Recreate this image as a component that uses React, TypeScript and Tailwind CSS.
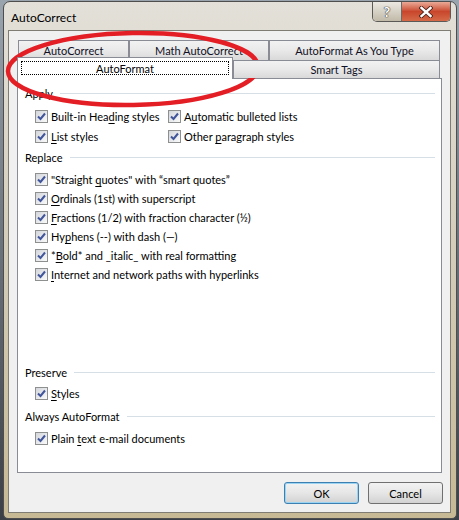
import React from "react"

const font = { fontFamily: "Lato, 'Noto Sans', sans-serif" }

function Check() {
  return (
    <span className="flex h-[13px] w-[13px] shrink-0 items-center justify-center border border-[#8e8f8f] bg-gradient-to-br from-[#d3d6db] to-[#fafafa]">
      <svg width="9" height="9" viewBox="0 0 9 9">
        <path d="M1 4.5 L3.5 7 L8 1.5" fill="none" stroke="#40559a" strokeWidth="2" />
      </svg>
    </span>
  )
}

// label parts: [before, underlined, after]
function Row({ parts, className = "" }: { parts: [string, string, string]; className?: string }) {
  return (
    <div className={`flex h-[19px] items-center gap-[3px] ${className}`}>
      <Check />
      <span className="whitespace-pre text-black">
        {parts[0]}
        <u className="underline-offset-2">{parts[1]}</u>
        {parts[2]}
      </span>
    </div>
  )
}

function Header({ label, className = "" }: { label: string; className?: string }) {
  return (
    <div className={`flex h-[16px] items-center gap-[7px] pl-[7px] pr-[6px] ${className}`}>
      <span className="text-black">{label}</span>
      <span className="h-px flex-1 bg-[#d5dfe5]" />
    </div>
  )
}

function Tab({ label, className = "" }: { label: string; className?: string }) {
  return (
    <div
      className={`flex items-center justify-center border border-b-0 border-[#898c95] bg-gradient-to-b from-[#f2f2f2] via-[#e9e9e9] to-[#d9d9d9] text-[#101024] ${className}`}
    >
      {label}
    </div>
  )
}

function Button({ label, def = false }: { label: string; def?: boolean }) {
  return (
    <div
      className={`flex h-[22px] w-[75px] items-center justify-center rounded-[3px] border ${
        def ? "border-[#3c7fb1] shadow-[inset_0_0_0_1px_#9bd3f2]" : "border-[#707070]"
      } bg-gradient-to-b from-[#f2f2f2] via-[#e6e6e6] to-[#d2d2d2] text-black`}
    >
      {label}
    </div>
  )
}

export default function App() {
  return (
    <div className="relative h-[520px] w-[459px] overflow-hidden bg-gradient-to-b from-[#9aa4ae] to-[#3b4046] pl-[3px] pt-[1px] text-[11px] leading-none" style={font}>
      <div className="flex h-[518px] w-[454px] flex-col rounded-t-[7px] rounded-b-[5px] border border-[#4e4e4e] bg-gradient-to-b from-[#e3e0d9] via-[#d3ccb8] to-[#c6b994]">
        {/* title bar */}
        <div className="flex h-[28px] items-start">
          <span className="pl-[7px] pt-[10px] text-[12px] text-black">AutoCorrect</span>
          <div className="ml-auto mr-[5px] flex h-[20px] overflow-hidden rounded-b-[5px] border border-t-0 border-[#5b5a57]">
            <div className="flex w-[29px] items-center justify-center border-r border-[#6b6a66] bg-gradient-to-b from-[#ece9e3] via-[#d6d1c5] to-[#c1baa9]">
              <span className="text-[14px] font-bold text-white [text-shadow:0_0_1px_#3a3a3a,0_0_1px_#3a3a3a,0_0_1px_#3a3a3a]">?</span>
            </div>
            <div className="flex w-[48px] items-center justify-center bg-gradient-to-b from-[#e8a997] via-[#c8462c] to-[#d56a48]">
              <svg width="14" height="12" viewBox="0 0 14 12">
                <path d="M2.5 2 L11.5 10 M11.5 2 L2.5 10" stroke="#4a2018" strokeWidth="4.2" strokeLinecap="square" />
                <path d="M2.5 2 L11.5 10 M11.5 2 L2.5 10" stroke="#ffffff" strokeWidth="2.4" strokeLinecap="square" />
              </svg>
            </div>
          </div>
        </div>

        {/* client area */}
        <div className="ml-[4px] mr-[5px] h-[483px] border border-[#7f7c74] bg-[#f0f0f0] pl-[8px] pt-[9px]">
          <div className="w-[425px]">
            {/* back row */}
            <div className="flex h-[20px] pl-[1px]">
              <Tab label="AutoCorrect" className="w-[111px]" />
              <Tab label="Math AutoCorrect" className="w-[140px]" />
              <Tab label="AutoFormat As You Type" className="w-[171px]" />
            </div>
            {/* front row */}
            <div className="relative z-10 flex h-[18px] items-end">
              <div className="-mb-px flex h-[22px] w-[216px] items-center justify-center border border-b-0 border-[#898c95] bg-white px-[3px] pb-[1px]">
                <div className="flex h-[14px] w-full items-center justify-center border border-dotted border-black text-black">
                  AutoFormat
                </div>
              </div>
              <Tab label="Smart Tags" className="h-[18px] w-[207px]" />
            </div>
            {/* panel */}
            <div className="h-[395px] w-[425px] border border-[#898c95] bg-white">
              <Header label="Apply" className="mt-[6px]" />
              <div className="mt-[5px] grid grid-cols-[133px_1fr] pl-[17px]">
                <Row parts={["Built-in Hea", "d", "ing styles"]} className="h-[20px]" />
                <Row parts={["A", "u", "tomatic bulleted lists"]} className="h-[20px]" />
                <Row parts={["", "L", "ist styles"]} className="h-[20px]" />
                <Row parts={["Other ", "p", "aragraph styles"]} className="h-[20px]" />
              </div>
              <Header label="Replace" className="mt-[3px]" />
              <div className="mt-[5px] pl-[17px]">
                <Row parts={["\"Straight ", "q", "uotes\" with \u201csmart quotes\u201d"]} />
                <Row parts={["", "O", "rdinals (1st) with superscript"]} />
                <Row parts={["", "F", "ractions (1/2) with fraction character (\u00bd)"]} />
                <Row parts={["Hy", "p", "hens (--) with dash (\u2014)"]} />
                <Row parts={["*", "B", "old* and _italic_ with real formatting"]} />
                <Row parts={["", "I", "nternet and network paths with hyperlinks"]} />
              </div>
              <Header label="Preserve" className="mt-[80px]" />
              <div className="mt-[4px] pl-[17px]">
                <Row parts={["", "S", "tyles"]} />
              </div>
              <Header label="Always AutoFormat" className="mt-[5px]" />
              <div className="mt-[5px] pl-[17px]">
                <Row parts={["Plain ", "t", "ext e-mail documents"]} />
              </div>
            </div>
            {/* buttons */}
            <div className="mt-[9px] flex w-[426px] justify-end gap-[9px]">
              <Button label="OK" def />
              <Button label="Cancel" />
            </div>
          </div>
        </div>
      </div>

      {/* red annotation ellipse */}
      <svg className="pointer-events-none absolute left-0 top-0" width="459" height="520">
        <ellipse cx="133" cy="69" rx="125" ry="36" fill="none" stroke="#e41e25" strokeWidth="4.5" transform="rotate(-1 133 69)" />
      </svg>
    </div>
  )
}
